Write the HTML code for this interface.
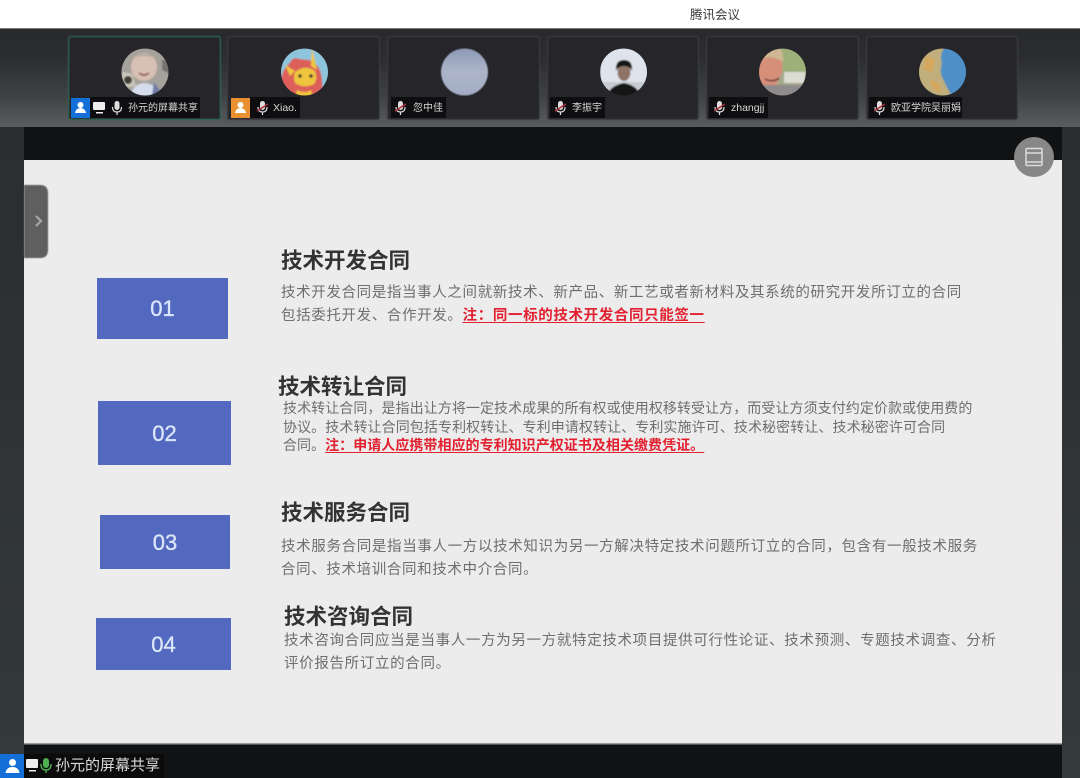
<!DOCTYPE html>
<html lang="zh-CN">
<head>
<meta charset="utf-8">
<title>腾讯会议</title>
<style>
*{margin:0;padding:0;box-sizing:border-box}
html,body{width:1080px;height:778px;overflow:hidden;background:#fff}
body{position:relative;font-family:"Liberation Sans","Noto Sans CJK SC",sans-serif}
.a{position:absolute;white-space:nowrap}
.t{font-size:21.5px;font-weight:700;color:#333;line-height:26px;filter:blur(.35px)}
.b{font-size:14.5px;color:#6e6e6e;line-height:20px;filter:blur(.35px)}
.s{font-size:14px}
.r{color:#e3202f;font-weight:700;text-decoration:underline;text-underline-offset:2px}
.n{background:#5369bf;color:#dbe6fa;font-size:22px;-webkit-text-stroke:.35px #dbe6fa;display:flex;align-items:center;justify-content:center;filter:blur(.3px);padding-top:1px}
.l{font-size:10px;color:#d8d8d8;background:#0e0e10;height:21px;line-height:23px;filter:blur(.25px)}
.e{font-size:10.5px}
</style>
</head>
<body>
<svg class="a" style="left:0;top:0" width="1080" height="778" viewBox="0 0 1080 778">
<defs>
<linearGradient id="top" x1="0" y1="0" x2="0" y2="1"><stop offset="0" stop-color="#28292b"/><stop offset=".3" stop-color="#2b2d2f"/><stop offset=".7" stop-color="#404345"/><stop offset="1" stop-color="#5a5d5f"/></linearGradient>
<linearGradient id="side" x1="0" y1="0" x2="0" y2="1"><stop offset="0" stop-color="#2b2d2f"/><stop offset="1" stop-color="#343a3c"/></linearGradient>
<filter id="bl"><feGaussianBlur stdDeviation=".7"/></filter>
<filter id="bs"><feGaussianBlur stdDeviation=".4"/></filter>
<clipPath id="c1"><circle cx="145" cy="72" r="23.5"/></clipPath>
<clipPath id="c2"><circle cx="304.5" cy="72" r="23.5"/></clipPath>
<clipPath id="c4"><circle cx="623.5" cy="72" r="23.5"/></clipPath>
<clipPath id="c5"><circle cx="782.5" cy="72" r="23.5"/></clipPath>
<clipPath id="c6"><circle cx="942.5" cy="72" r="23.5"/></clipPath>
<linearGradient id="sky" x1="0" y1="0" x2="0" y2="1"><stop offset="0" stop-color="#8d9ab6"/><stop offset=".5" stop-color="#adb5c8"/><stop offset="1" stop-color="#a3adc5"/></linearGradient>
</defs>
<rect width="1080" height="28" fill="#fff"/>
<rect y="28" width="1080" height="99" fill="url(#top)"/>
<rect y="28" width="1080" height="1" fill="#7a7a7a"/>
<rect y="127" width="1080" height="651" fill="url(#side)"/>
<rect x="24" y="127" width="1038" height="33" fill="#111213"/>
<rect x="24" y="160" width="1038" height="584" fill="#ececec"/>
<rect x="24" y="743" width="1038" height="1.5" fill="#9a9a9a"/>
<rect x="24" y="744.5" width="1038" height="33.5" fill="#111213"/>
<g filter="url(#bs)">
<rect x="68.500" y="36.500" width="152" height="83" rx="2" fill="#26272b" stroke="#2f6b58"/>
<rect x="227.500" y="36.500" width="152" height="83" rx="2" fill="#26272b" stroke="#3c3e41"/>
<rect x="387.500" y="36.500" width="152" height="83" rx="2" fill="#26272b" stroke="#3c3e41"/>
<rect x="547.500" y="36.500" width="151" height="83" rx="2" fill="#26272b" stroke="#3c3e41"/>
<rect x="706.500" y="36.500" width="152" height="83" rx="2" fill="#26272b" stroke="#3c3e41"/>
<rect x="866.500" y="36.500" width="151" height="83" rx="2" fill="#26272b" stroke="#3c3e41"/>
<path d="M24 185h16q8 0 8 8v57q0 8-8 8H24z" fill="#5f5f5f"/>
</g>
<path d="M36 216l5 5-5 5" fill="none" stroke="#a5a5a5" stroke-width="2.200"/>
<circle cx="1034" cy="157" r="20" fill="#878787"/>
<path d="M1027 148.500h14q1 0 1 1v15q0 1-1 1h-14q-1 0-1-1v-15q0-1 1-1zM1026 153h16M1026 162h16" fill="none" stroke="#dcdcdc" stroke-width="1.500"/>

<g clip-path="url(#c1)" filter="url(#bl)">
<rect x="120" y="48" width="50" height="50" fill="#a5a29c"/>
<path d="M120 48h50v12h-8v10l8 4v-26z" fill="#75736f"/>
<ellipse cx="144" cy="67" rx="13" ry="14" fill="#d9c0b4"/>
<path d="M132 58q12-9 24 0-12-4-24 0z" fill="#b9aca3"/>
<path d="M122 72l10 2 4 12-14 2z" fill="#c9c6bb"/>
<circle cx="128" cy="80" r="4" fill="#3f3d35"/>
<path d="M130 98q2-14 14-15 14 1 18 15z" fill="#d5dcec"/>
<path d="M139 72q5 4 10 0v2q-5 4-10 0z" fill="#8a5c56"/>
<path d="M154 82l10 14h-12z" fill="#6f7ba6"/>
</g>
<g clip-path="url(#c2)" filter="url(#bl)">
<rect x="280" y="48" width="50" height="50" fill="#8ec4dc"/>
<path d="M283 98q-6-24 6-34 4-8 10-5l10 1q10 4 12 14 3 12-1 24z" fill="#dd5f5a"/>
<path d="M295 72q10-8 20-1 3 8-1 13-10 5-19-1-2-5 0-11z" fill="#eec53c"/>
<path d="M295 71l-10-6 5 11zM311 66l1-18 5 22z" fill="#eec53c"/>
<circle cx="300" cy="76" r="1.800" fill="#333"/><circle cx="311" cy="76" r="1.800" fill="#333"/>
<path d="M297 90q8 4 14 0l2 8h-18z" fill="#eec53c"/>
</g>
<circle cx="464.500" cy="72" r="23.500" fill="url(#sky)" filter="url(#bs)"/>
<g clip-path="url(#c4)" filter="url(#bl)">
<rect x="600" y="48" width="50" height="50" fill="#dfe4ec"/>
<rect x="600" y="82" width="50" height="16" fill="#c8ccd0"/>
<ellipse cx="624" cy="72" rx="6.500" ry="9" fill="#8f7365"/>
<path d="M616 71q-1-11 8-11t8 11q-2-5-8-5t-8 5z" fill="#141416"/>
<path d="M607 98q1-12 17-15 15 3 17 15z" fill="#141517"/>
</g>
<g clip-path="url(#c5)" filter="url(#bl)">
<rect x="758" y="48" width="50" height="50" fill="#a3a98a"/>
<path d="M775 48h33v24h-28z" fill="#9db07a"/>
<rect x="784" y="72" width="21" height="11" fill="#dcdcd4"/>
<path d="M758 48h18q8 8 6 24l-6 14h-18z" fill="#d6907a"/>
<path d="M758 48h22q4 6 3 14-12-8-25-2z" fill="#cdb795"/>
<rect x="758" y="85" width="50" height="13" fill="#8f8b8c"/>
<path d="M765 79q8 4 14-1" stroke="#5a3230" stroke-width="1.500" fill="none"/>
</g>
<g clip-path="url(#c6)" filter="url(#bl)">
<rect x="918" y="48" width="50" height="50" fill="#4d8fc6"/>
<path d="M918 48h26q-5 8-2 15-3 9 1 16 4 9 10 19h-35z" fill="#c0ae7c"/>
<path d="M925 56l10 3-3 14-8-3zM930 80l9 3 2 10-8-4z" fill="#d4a85c"/>
</g>
</svg>

<div class="a" style="left:690px;top:7px;font-size:12.500px;line-height:16px;color:#3c3c3c;filter:blur(.3px)">腾讯会议</div>

<!-- tile labels -->
<div class="a l" style="left:90px;top:97px;width:110px;padding-left:38px">孙元的屏幕共享</div>
<div class="a" style="left:71px;top:98px;width:19px;height:20px;background:#1470d8"></div>
<svg class="a" style="left:71px;top:98px" width="60" height="20" viewBox="0 0 60 20"><circle cx="9.500" cy="7" r="3" fill="#fff"/><path d="M4 15q1-5 5.500-5t5.500 5z" fill="#fff"/><rect x="22" y="4" width="12" height="8" rx="1" fill="#eee"/><rect x="25" y="14" width="7" height="1.500" fill="#eee"/><rect x="43.500" y="3" width="5" height="9" rx="2.500" fill="#ddd"/><path d="M41.500 9q0 5 4.500 5t4.500-5M46 14v3" fill="none" stroke="#ddd" stroke-width="1.200"/></svg>

<div class="a l e" style="left:250px;top:97px;width:50px;padding-left:23px">Xiao.</div>
<div class="a" style="left:231px;top:98px;width:19px;height:20px;background:#ea9030"></div>
<svg class="a" style="left:231px;top:98px" width="19" height="20" viewBox="0 0 19 20"><circle cx="9.500" cy="7" r="3" fill="#fff"/><path d="M4 15q1-5 5.500-5t5.500 5z" fill="#fff"/></svg>

<div class="a l" style="left:391px;top:97px;width:55px;padding-left:22px">忽中佳</div>
<div class="a l" style="left:550px;top:97px;width:55px;padding-left:22px">李振宇</div>
<div class="a l e" style="left:709px;top:97px;width:59px;padding-left:22px">zhangjj</div>
<div class="a l" style="left:869px;top:97px;width:93px;padding-left:22px">欧亚学院吴丽娟</div>
<svg class="a" style="left:0;top:0" width="1080" height="130" viewBox="0 0 1080 130">
<defs><g id="m"><rect x="3" y="0" width="5" height="9" rx="2.500" fill="#e4dcdc"/><path d="M1 6q0 5 4.500 5t4.500-5M5.500 11v3" fill="none" stroke="#ddd" stroke-width="1.200"/><path d="M0 10l11-7" stroke="#a62f3c" stroke-width="1.500"/></g></defs>
<use href="#m" x="257" y="101"/><use href="#m" x="395" y="101"/><use href="#m" x="555" y="101"/><use href="#m" x="714" y="101"/><use href="#m" x="874" y="101"/>
</svg>

<!-- slide content -->
<div class="a n" style="left:97px;top:278px;width:131px;height:61px">01</div>
<div class="a t" style="left:281px;top:248px">技术开发合同</div>
<div class="a b" style="left:281px;top:283px;letter-spacing:.63px">技术开发合同是指当事人之间就新技术、新产品、新工艺或者新材料及其系统的研究开发所订立的合同</div>
<div class="a b" style="left:281px;top:306px;letter-spacing:.63px">包括委托开发、合作开发。<span class="r">注：同一标的技术开发合同只能签一</span></div>

<div class="a n" style="left:98px;top:401px;width:133px;height:64px">02</div>
<div class="a t" style="left:278px;top:374px">技术转让合同</div>
<div class="a b s" style="left:283px;top:398px;letter-spacing:.07px">技术转让合同，是指出让方将一定技术成果的所有权或使用权移转受让方，而受让方须支付约定价款或使用费的</div>
<div class="a b s" style="left:283px;top:417px;letter-spacing:.09px">协议。技术转让合同包括专利权转让、专利申请权转让、专利实施许可、技术秘密转让、技术秘密许可合同</div>
<div class="a b s" style="left:283px;top:435px;letter-spacing:.04px">合同。<span class="r">注：申请人应携带相应的专利知识产权证书及相关缴费凭证。</span></div>

<div class="a n" style="left:100px;top:515px;width:130px;height:54px">03</div>
<div class="a t" style="left:281px;top:500px">技术服务合同</div>
<div class="a b" style="left:281px;top:537px;letter-spacing:.65px">技术服务合同是指当事人一方以技术知识为另一方解决特定技术问题所订立的合同，包含有一般技术服务</div>
<div class="a b" style="left:281px;top:560px;letter-spacing:.63px">合同、技术培训合同和技术中介合同。</div>

<div class="a n" style="left:96px;top:618px;width:135px;height:52px">04</div>
<div class="a t" style="left:284px;top:604px">技术咨询合同</div>
<div class="a b" style="left:284px;top:631px;letter-spacing:.66px">技术咨询合同应当是当事人一方为另一方就特定技术项目提供可行性论证、技术预测、专题技术调查、分析</div>
<div class="a b" style="left:284px;top:654px;letter-spacing:.66px">评价报告所订立的合同。</div>

<!-- bottom label -->
<div class="a" style="left:24px;top:754px;width:140px;height:24px;background:#0b0b0c"></div>
<div class="a" style="left:0;top:754px;width:24px;height:24px;background:#1470d8"></div>
<svg class="a" style="left:0;top:754px" width="56" height="24" viewBox="0 0 56 24"><circle cx="12.500" cy="8.500" r="3.500" fill="#fff"/><path d="M5.500 19q1-6 7-6t7 6z" fill="#fff"/><rect x="26" y="5" width="12" height="9" rx="1" fill="#eee"/><rect x="29" y="16" width="7" height="1.500" fill="#eee"/><rect x="43" y="4" width="6" height="10" rx="3" fill="#4caf50"/><path d="M41 10q0 6 5 6t5-6M46 16v3" fill="none" stroke="#4caf50" stroke-width="1.400"/></svg>
<div class="a" style="left:55px;top:756px;font-size:15px;line-height:20px;color:#d8d8d8;filter:blur(.3px)">孙元的屏幕共享</div>
</body>
</html>
